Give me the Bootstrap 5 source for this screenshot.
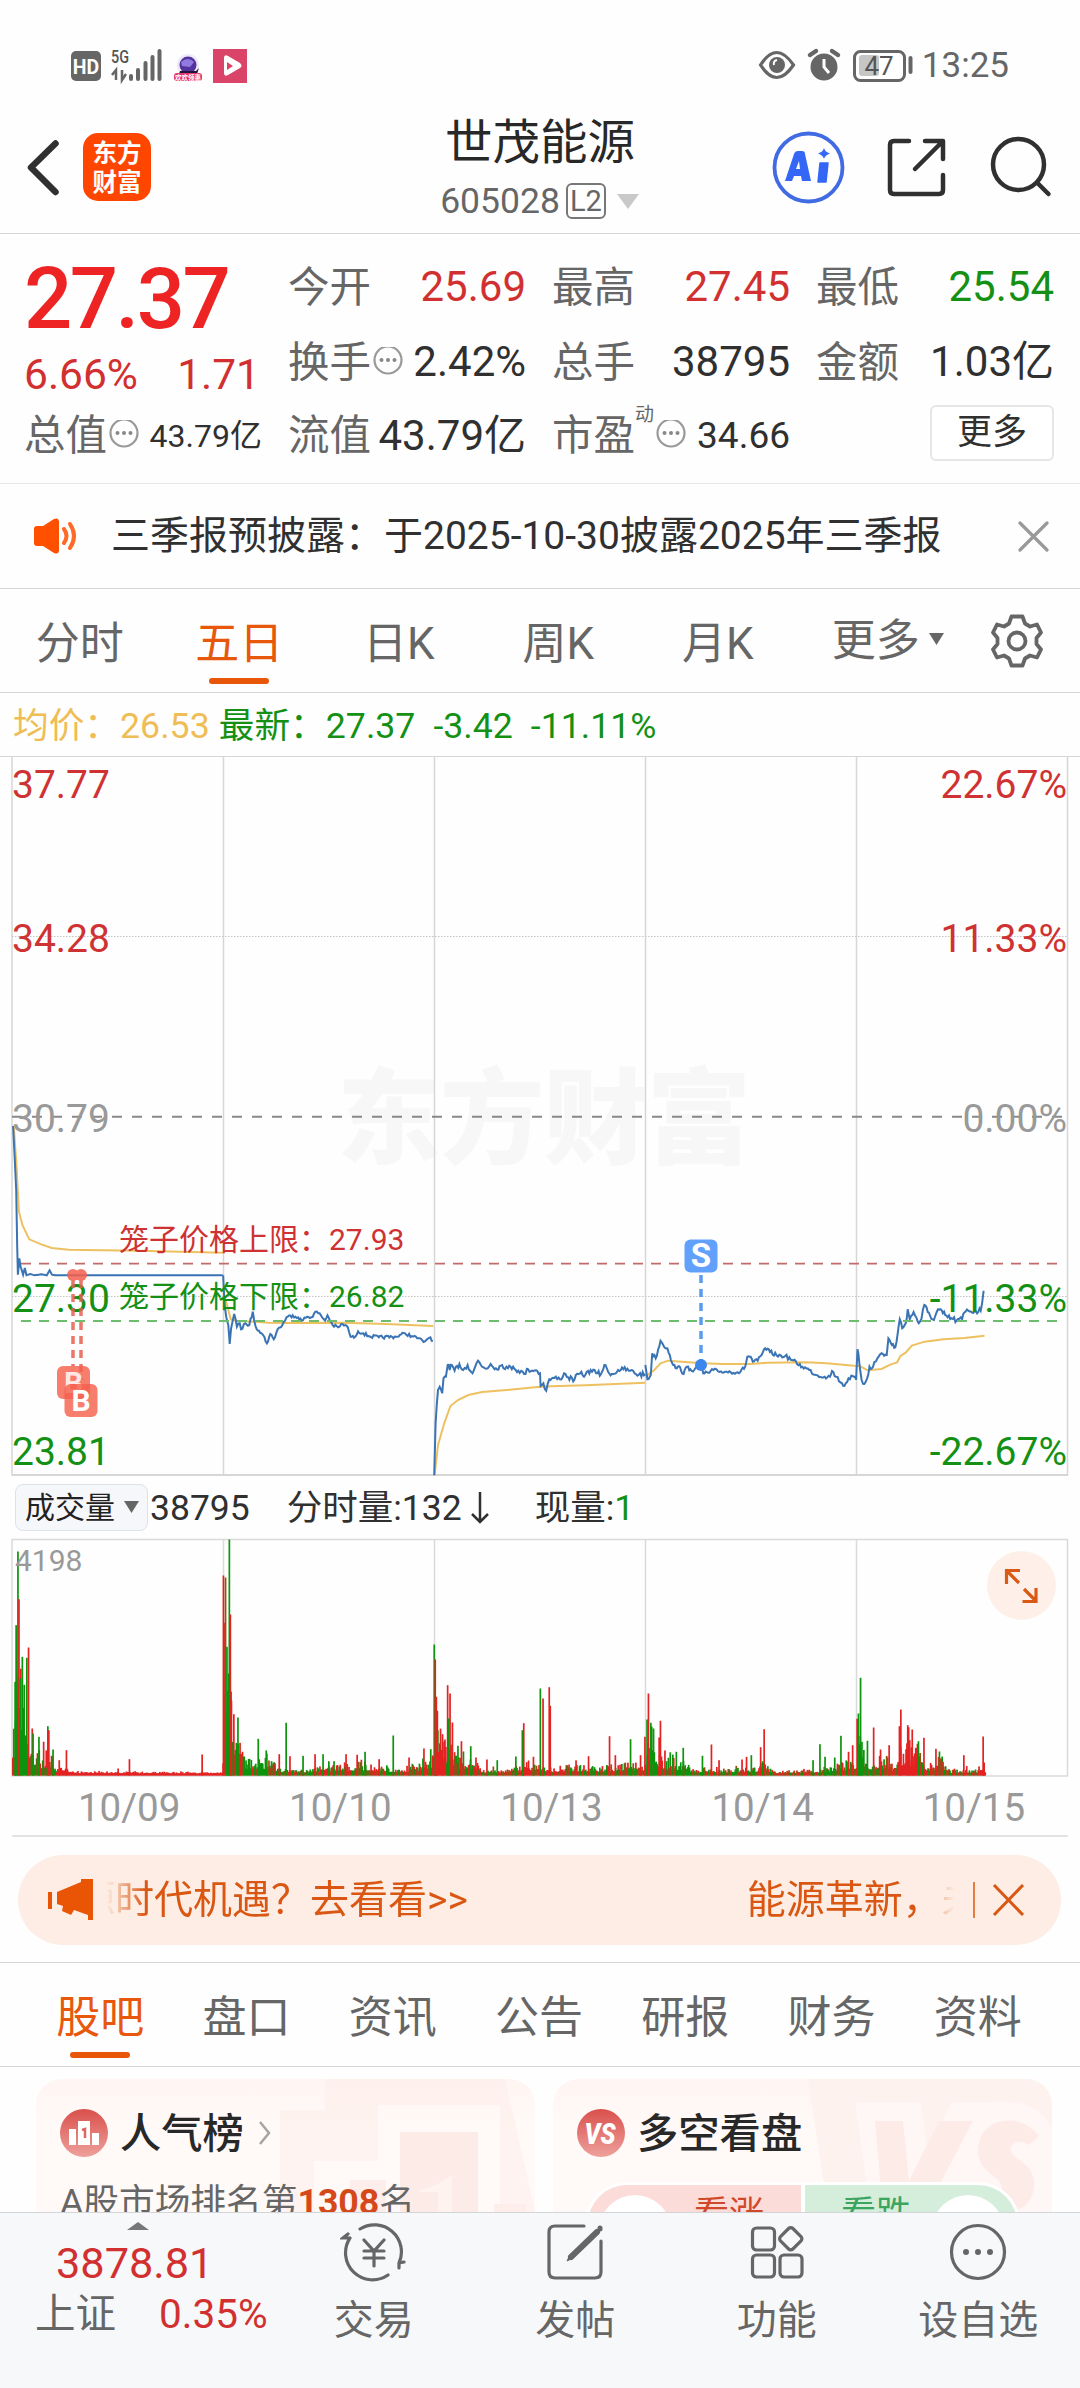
<!DOCTYPE html>
<html lang="zh-CN">
<head>
<meta charset="utf-8">
<meta name="viewport" content="width=device-width, initial-scale=1">
<title>世茂能源 605028</title>
<link href="https://cdn.jsdelivr.net/npm/bootstrap@5.3.0/dist/css/bootstrap.min.css" rel="stylesheet">
<style>
:root{--up:#d23030;--down:#149114;--accent:#e8580c;--ink:#303030;--muted-ink:#666;--rule:#d6d6d6}
body{font-family:Roboto,"Noto Sans CJK SC",sans-serif;color:var(--ink);background:#fefefe;width:1080px;height:2388px;overflow:hidden;line-height:1.2}
svg{display:block;flex:none}
svg text{font-family:Roboto,"Noto Sans CJK SC",sans-serif}
.c-up{color:var(--up)}.c-down{color:var(--down)}.c-muted{color:var(--muted-ink)}.c-accent{color:var(--accent)}
.rule-b{border-bottom:1px solid var(--rule)}
.status{height:100px;padding:32px 71px 0 70px;color:#666}
.clock{font-size:35px;margin-left:8px;line-height:68px}
.topbar{height:134px}
.side{width:340px}
.stock-name{font-size:47.5px;line-height:60px;color:#282828}
.stock-code{font-size:35.5px;line-height:52px;color:#666;padding-top:2px}
.tag-l2{border:2px solid #777;border-radius:6px;font-size:29px;line-height:32px;width:40px;height:36px;text-align:center;margin-left:6px}
.quote{height:250px;padding:16px 25px 0 24px;gap:26px;border-bottom:1px solid #e8e8e8}
.quote>div{width:238px}
.q-row{height:75px;font-size:42px;white-space:nowrap}
.q-row.last-row{height:72px}
.q-row .lab{font-size:41.5px;color:#666}
.price{height:98px;line-height:98px;font-size:85px;font-weight:500;color:#ee2424;letter-spacing:-2.5px;white-space:nowrap}
.chg{height:52px;font-size:42.5px;padding-right:2px}
.sup-dong{font-size:19px;color:#666;align-self:flex-start;margin-top:4px}
.btn-more{border:2px solid #e6e6e6;border-radius:6px;width:124px;height:56px;font-size:35px;line-height:50px;padding:0;color:var(--ink);background:#fff;text-align:center}
.notice{height:105px;padding:0 31px 0 33px;font-size:39px;white-space:nowrap}
.k-tabs{height:104px;font-size:44px;color:#666}
.k-tabs>div{height:103px;line-height:110px;position:relative;text-align:center;white-space:nowrap;width:159.5px}
.on{color:var(--accent)}
.on::after{content:"";position:absolute;left:50%;margin-left:-30px;bottom:8px;width:60px;height:6px;border-radius:3px;background:#e8560a}
.avg{height:64px;font-size:35.7px;line-height:66px;padding-left:13px;white-space:pre}
.volhead{height:62px;padding-left:15px;font-size:35.5px;white-space:nowrap}
.volhead>span{padding-top:3px}
.pill{width:133px;height:47px;border:1px solid #dfe2e7;border-radius:8px;background:#f6f7fa;font-size:30px;padding:2px 0 0 9px;color:#222}
.dates{height:60px;margin:0 12px;border-bottom:2px solid #e3e3e3;font-size:38.5px;line-height:61px;color:#999}
.dates div{flex:1 1 0;text-align:center;padding-left:23px}
.bannerwrap{height:126px;padding:18px 19px 0 18px}
.promo{height:90px;border-radius:45px;background:#fdede4;color:#d95712;font-size:39px;padding:0 33px 0 29px;white-space:nowrap}
.ticker{width:850px;height:90px;line-height:90px;margin-left:11px;overflow:hidden;-webkit-mask-image:linear-gradient(90deg,transparent 0,#000 40px,#000 808px,transparent 848px);mask-image:linear-gradient(90deg,transparent 0,#000 40px,#000 808px,transparent 848px)}
.ticker span:first-child{margin-left:-30px}
.ticker span:last-child{margin-left:279px}
.n-tabs{height:104px;padding:0 29px 0 27px;font-size:44px;color:#666}
.n-tabs>div{flex:1 1 0;text-align:center;line-height:110px;height:103px;position:relative}
.cards{height:145px;padding:12px 28px 0 36px;gap:18px;overflow:hidden}
.tile{width:499px;height:240px;border-radius:26px;background:linear-gradient(#fff5f2,#fffaf8 50px);position:relative;overflow:hidden;flex:none}
.tile>.art{position:absolute;inset:0}
.tile>.body{position:relative}
.tile h3{font-size:41.3px;line-height:50px;font-weight:500;margin:2px 0 0 12px;color:#282828}
.tile .head{padding:29px 0 0 24px;height:79px}
.rank{font-size:35.7px;line-height:48px;padding:20px 0 0 24px;color:#666;white-space:nowrap}
.rank b{color:#d5481a;font-weight:700}
.votebar{margin:24px 0 0 32px;width:435px;height:84px;border-radius:42px;overflow:hidden;border:3px solid #fff;font-size:35px;line-height:60px}
.votebar div{flex:1 1 0}
.foot{height:176px;background:#f7f8fa;border-top:1px solid #d4d5d9}
.idx{width:273px}
.idx .num{font-size:43.3px;line-height:44px;padding-left:56px;margin-top:10px}
.idx .sub{font-size:40.5px;line-height:50px;padding-left:35px;margin-top:3px}
.f-item{width:201.5px;font-size:40px;color:#666;line-height:50px;padding-top:9px}
</style>
<script src="https://cdn.jsdelivr.net/npm/bootstrap@5.3.0/dist/js/bootstrap.bundle.min.js"></script>
</head>
<body>

<div class="status d-flex justify-content-between align-items-center">
  <svg width="178" height="40" viewBox="70 46 178 40">
    <rect x="71" y="51" width="30" height="30" rx="5" fill="#666"/>
    <text x="86" y="73.500" font-size="19.500" font-weight="700" fill="#fff" text-anchor="middle">HD</text>
    <text x="111" y="63" font-size="18" font-weight="500" fill="#555" textLength="18" lengthAdjust="spacingAndGlyphs">5G</text>
    <path d="M116 80V70l-4 5M122 70v10l4-6" fill="none" stroke="#666" stroke-width="2.500"/>
    <path d="M131 76v3M138 70v9M145.500 63v16M152.500 57v22M159.500 51v28" stroke="#666" stroke-width="4" stroke-linecap="round"/>
    <circle cx="188" cy="65" r="11" fill="#eee9f6"/><circle cx="188" cy="65" r="8.500" fill="#53349f"/>
    <path d="M181 62q7-6 13 0l-4 5-8-1z" fill="#927be0"/><path d="M180 71h16l3-3-2 6h-18z" fill="#20163a"/>
    <rect x="174" y="73" width="28" height="8" rx="3" fill="#e5366f"/><text x="188" y="79.500" font-size="6.500" font-weight="700" fill="#fff" text-anchor="middle">欢欢领惠</text>
    <rect x="213" y="49" width="34" height="34" fill="#d94468"/>
    <path d="M224 58v15q0 4 4 2l12-7q3-2 0-5l-12-7q-4-2-4 2z" fill="#fff"/><path d="M227 62v8l6-4z" fill="#d94468"/>
  </svg>
  <div class="d-flex align-items-center">
    <svg width="156" height="40" viewBox="760 46 156 40" fill="none">
      <path d="M762.500 65q16-25 33 0q-17 25-33 0z" stroke="#666" stroke-width="3.200"/><circle cx="779" cy="65" r="8" fill="#666"/><path d="M776 65q-1-4 3-5" stroke="#fff" stroke-width="2"/>
      <circle cx="826" cy="67" r="13.500" fill="#666"/><path d="M826 59v8l5 6" stroke="#fff" stroke-width="3"/><path d="M812 55l6-4M840 55l-6-4" stroke="#666" stroke-width="4.500" stroke-linecap="round"/>
      <rect x="856.500" y="51.500" width="50" height="29" rx="6" stroke="#666" stroke-width="3"/><rect x="861" y="55" width="20" height="21" rx="3" fill="#c6c6c6"/>
      <path d="M912.500 58v14" stroke="#666" stroke-width="4" stroke-linecap="round"/>
      <text x="881" y="74.500" font-size="26" fill="#555" text-anchor="middle">47</text>
    </svg>
    <div class="clock">13:25</div>
  </div>
</div>

<header class="topbar rule-b d-flex justify-content-between">
  <div class="side d-flex align-items-center">
    <svg width="60" height="60" viewBox="0 136 60 60"><path d="M55.500 142.500L31 166.500l24.500 24.500" fill="none" stroke="#303030" stroke-width="6.500" stroke-linecap="round" stroke-linejoin="round"/></svg>
    <svg width="68" height="68" viewBox="0 0 68 68" style="margin-left:23px"><rect width="68" height="68" rx="15" fill="#ff4600"/><text font-weight="700" font-size="24.500" fill="#fff" text-anchor="middle"><tspan x="34" y="29">东方</tspan><tspan x="34" y="58">财富</tspan></text></svg>
  </div>
  <div class="text-center" style="padding-top:13px">
    <div class="stock-name">世茂能源</div>
    <div class="stock-code d-flex align-items-center justify-content-center">605028<span class="tag-l2">L2</span>
      <svg width="34" height="20" viewBox="0 0 34 20"><path d="M11 3h22L22 18z" fill="#c9c9c9"/></svg></div>
  </div>
  <div class="side d-flex align-items-center">
    <svg width="308" height="76" viewBox="770 128 308 76" fill="none" stroke="#303030" stroke-width="4.500" stroke-linecap="round" style="margin-left:30px">
      <circle cx="808.500" cy="166.500" r="34" stroke="#416be3" stroke-width="3.800"/>
      <path d="M785 180l9-27q1-3 4-3h4q3 0 3 3l6 27h-9l-1-5h-7l-2 5zM796 168h4l-1-8z" fill="#3467f5" stroke="none" fill-rule="evenodd"/>
      <path d="M820 162h8l-2 19h-8z" fill="#3467f5" stroke="#3467f5" stroke-width="1.500" stroke-linejoin="round"/>
      <path d="M824 147q1 4 6 5.500q-5 1.500-6 5.500q-1-4-6-5.500q5-1.500 6-5.500z" fill="#3467f5" stroke="none"/>
      <path d="M909 140h-15q-4 0-4 4v45q0 4 4 4h45q4 0 4-4v-15M925 140h18v18M942 141l-27 27" stroke-linejoin="round"/>
      <circle cx="1018.500" cy="163.500" r="25.500"/><path d="M1037 181.500l11.500 11.500"/>
    </svg>
  </div>
</header>

<section class="quote d-flex">
  <div>
    <div class="price">27.37</div>
    <div class="chg c-up d-flex justify-content-between align-items-center"><span>6.66%</span><span>1.71</span></div>
    <div class="q-row last-row d-flex align-items-center"><span class="lab">总值</span><svg width="32" height="32" viewBox="0 0 32 32"><circle cx="17" cy="12" r="13.500" fill="none" stroke="#999" stroke-width="2.200" transform="translate(0 1)"/><g fill="#888"><circle cx="10.500" cy="13" r="2"/><circle cx="17" cy="13" r="2"/><circle cx="23.500" cy="13" r="2"/></g></svg><span class="ms-auto" style="font-size:32px">43.79亿</span></div>
  </div>
  <div>
    <div class="q-row d-flex justify-content-between align-items-center"><span class="lab">今开</span><span class="c-up">25.69</span></div>
    <div class="q-row d-flex align-items-center"><span class="lab">换手</span><svg width="32" height="32" viewBox="0 0 32 32"><circle cx="17" cy="13" r="13.500" fill="none" stroke="#999" stroke-width="2.200"/><g fill="#888"><circle cx="10.500" cy="13" r="2"/><circle cx="17" cy="13" r="2"/><circle cx="23.500" cy="13" r="2"/></g></svg><span class="ms-auto">2.42%</span></div>
    <div class="q-row last-row d-flex justify-content-between align-items-center"><span class="lab">流值</span><span>43.79亿</span></div>
  </div>
  <div>
    <div class="q-row d-flex justify-content-between align-items-center"><span class="lab">最高</span><span class="c-up">27.45</span></div>
    <div class="q-row d-flex justify-content-between align-items-center"><span class="lab">总手</span><span>38795</span></div>
    <div class="q-row last-row d-flex align-items-center"><span class="lab">市盈</span><span class="sup-dong">动</span><svg width="32" height="32" viewBox="0 0 32 32"><circle cx="17" cy="13" r="13.500" fill="none" stroke="#999" stroke-width="2.200"/><g fill="#888"><circle cx="10.500" cy="13" r="2"/><circle cx="17" cy="13" r="2"/><circle cx="23.500" cy="13" r="2"/></g></svg><span class="ms-auto" style="font-size:37px">34.66</span></div>
  </div>
  <div>
    <div class="q-row d-flex justify-content-between align-items-center"><span class="lab">最低</span><span class="c-down">25.54</span></div>
    <div class="q-row d-flex justify-content-between align-items-center"><span class="lab">金额</span><span>1.03亿</span></div>
    <div class="q-row last-row d-flex justify-content-end align-items-center"><button class="btn-more" style="margin-top:-6px">更多</button></div>
  </div>
</section>

<section class="notice rule-b d-flex align-items-center">
  <svg width="46" height="38" viewBox="0 0 46 38"><path d="M1 12q0-3 3-3h6L21 2q5-2 5 3v28q0 5-5 3l-11-7H4q-3 0-3-3z" fill="#ff5000"/><path d="M31 12q5 7 0 14M37 7q8 12 0 24" fill="none" stroke="#ff6a26" stroke-width="4" stroke-linecap="round"/></svg>
  <span style="margin-left:32px">三季报预披露：于2025-10-30披露2025年三季报</span>
  <svg class="ms-auto" width="31" height="31" viewBox="0 0 31 31"><path d="M2 2l27 27M29 2L2 29" stroke="#999" stroke-width="3.200" stroke-linecap="round"/></svg>
</section>

<nav class="k-tabs rule-b d-flex">
  <div>分时</div><div class="on">五日</div><div>日K</div><div>周K</div><div>月K</div>
  <div class="d-flex align-items-center justify-content-center" style="padding-left:23px">更多<svg width="26" height="16" viewBox="0 0 26 16"><path d="M9 0h15l-7.500 12z" fill="#666"/></svg></div>
  <svg width="60" height="60" viewBox="-30 -30 60 60" style="margin:22px 0 0 30px" fill="none" stroke="#666" stroke-width="3.800" stroke-linejoin="round"><path d="M-5.500-24.500H5.500L8-17.500L13-14.500L20-16.500L24-8.500L19.500-3V3L24 8.500L20 16.500L13 14.500L8 17.500L5.500 24.500H-5.500L-8 17.500L-13 14.500L-20 16.500L-24 8.500L-19.500 3V-3L-24-8.500L-20-16.500L-13-14.500L-8-17.500Z"/><circle r="8.500"/></svg>
</nav>

<div class="avg rule-b"><span style="color:#efbd55">均价：26.53</span><span class="c-down"><span style="margin-left:9px">最新：27.37</span><span style="margin-left:18px">-3.42</span><span style="margin-left:18px">-11.11%</span></span></div>

<svg width="1080" height="719" viewBox="0 757 1080 719">
  <text x="337" y="1156" font-size="104" font-weight="900" fill="#f7f7f7" textLength="414">东方财富</text>
  <g stroke="#d6d6d6" stroke-width="1.500" fill="none"><path d="M12 757v719M223.500 757v719M434.500 757v719M645.500 757v719M856.500 757v719M1067.500 757v719"/><path d="M12 1475h1056" stroke-width="2"/></g>
  <path d="M12 936.500h1056M12 1296.500h1056" stroke="#c4c4c4" stroke-width="1" stroke-dasharray="1.500 1.500"/>
  <path d="M12 1116.700h1051" stroke="#888" stroke-width="2" stroke-dasharray="10 10"/>
  <g font-size="39"><g fill="#cf3232"><text x="12" y="797.500">37.77</text><text x="12" y="951.500">34.28</text><text x="1067" y="797.500" text-anchor="end">22.67%</text><text x="1067" y="951.500" text-anchor="end">11.33%</text></g>
  <g fill="#999"><text x="12" y="1131.500">30.79</text><text x="1067" y="1131.500" text-anchor="end">0.00%</text></g></g>
  <g transform="translate(0 1040) scale(.34436 .33333)" fill="none" stroke="#edc160">
    <path vector-effect="non-scaling-stroke" stroke-width="2" d="M40 258L48 380L55 515L65 555L85 598L120 613L150 624L200 629L400 632L647 638M648 760L658 790L670 838L690 843L740 845L780 848L830 849L1000 848L1120 852L1258 858M1262 1306L1272 1215L1290 1150L1308 1098L1330 1080L1360 1065L1400 1056L1480 1049L1560 1041L1600 1039L1700 1036L1874 1028M1874 1010L1900 990L1918 970L1940 962L1990 966L2040 970L2100 972L2180 972L2230 968L2340 967L2400 970L2480 977L2496 978L2520 991L2560 987L2585 974L2605 967L2615 948L2630 938L2648 917L2685 905L2740 898L2800 894L2859 887"/>
  </g>
  <path id="priceLine" fill="none" stroke="#3a74b4" stroke-width="2"/>
  <path d="M21 1263.700h1038" stroke="#c46a6a" stroke-width="1.800" stroke-dasharray="10 8"/>
  <path d="M21 1321h1038" stroke="#6ebd6e" stroke-width="1.800" stroke-dasharray="10 8"/>
  <text x="119" y="1250" font-size="30" fill="#cf3232">笼子价格上限：27.93</text>
  <text x="119" y="1307" font-size="30" fill="#149114">笼子价格下限：26.82</text>
  <g font-size="39" fill="#149114"><text x="12" y="1311.500">27.30</text><text x="12" y="1464.500">23.81</text><text x="1067" y="1311.500" text-anchor="end">-11.33%</text><text x="1067" y="1464.500" text-anchor="end">-22.67%</text></g>
  <g fill="#f5604d" opacity=".85"><circle cx="73" cy="1275" r="6"/><circle cx="81" cy="1275" r="6"/>
  <path d="M73 1280v86M81 1280v100" stroke="#e8604f" stroke-width="3.500" stroke-dasharray="8 6"/></g>
  <g fill="#f5604d" fill-opacity=".82"><rect x="57" y="1366" width="33" height="33" rx="6"/><text x="73.500" y="1393" font-size="30" font-weight="700" fill="#fff" text-anchor="middle">B</text>
  <rect x="64.500" y="1384" width="33" height="33" rx="6"/><text x="81" y="1411" font-size="30" font-weight="700" fill="#fff" fill-opacity="1" text-anchor="middle">B</text></g>
  <path d="M701 1275v86" stroke="#5b9bee" stroke-width="3.500" stroke-dasharray="8 6"/>
  <circle cx="701" cy="1365" r="6" fill="#3d86ec"/>
  <rect x="684.500" y="1239.500" width="33" height="33" rx="6" fill="#62a1fb"/><text x="701" y="1267" font-size="33" font-weight="700" fill="#fff" text-anchor="middle">S</text>
</svg>

<div class="volhead d-flex align-items-center">
  <div class="pill d-flex align-items-center">成交量<svg width="26" height="16" viewBox="0 0 26 16"><path d="M9 1h15l-7.500 12z" fill="#666"/></svg></div>
  <span style="margin-left:2px">38795</span><span style="margin-left:37px">分时量:132</span>
  <svg width="32" height="38" viewBox="0 0 32 38"><path d="M18 4v30M10 26l8 8 8-8" fill="none" stroke="#303030" stroke-width="2.500"/></svg>
  <span style="margin-left:41px">现量:<span class="c-down">1</span></span>
</div>

<svg width="1080" height="239" viewBox="0 1538 1080 239">
  <path d="M12 1539.500h1055.500V1776H12zM223.500 1540v235M434.500 1540v235M645.500 1540v235M856.500 1540v235" fill="none" stroke="#dadada" stroke-width="1.500"/>
  <g id="bars"></g>
  <text x="15" y="1570.500" font-size="30" fill="#999">4198</text>
  <circle cx="1021.500" cy="1585.500" r="34.500" fill="#fef0e8"/>
  <path d="M1006.500 1584v-13.500h13.500M1007 1571l12 12M1036 1588v13.500h-13.500M1036 1601l-12-12" fill="none" stroke="#d95a17" stroke-width="3.200"/>
</svg>
<div class="dates d-flex"><div>10/09</div><div>10/10</div><div>10/13</div><div>10/14</div><div>10/15</div></div>

<div class="bannerwrap rule-b">
  <div class="promo d-flex align-items-center">
    <svg width="48" height="42" viewBox="0 0 48 42" fill="#ea5505"><path d="M1 13h4v17H1zM10 13l24-10v-3h12v41h-5V36l-14-5-3 5-9-4 1-5-6-2z"/></svg>
    <div class="ticker"><span>源时代机遇？去看看&gt;&gt;</span><span>能源革新，未</span></div>
    <svg class="ms-auto" width="58" height="38" viewBox="0 0 58 38" fill="none" stroke="#d95712"><path d="M4 1v36" stroke-width="1.500"/><path d="M24 4l29 30M53 4L24 34" stroke-width="3"/></svg>
  </div>
</div>

<nav class="n-tabs rule-b d-flex"><div class="on">股吧</div><div>盘口</div><div>资讯</div><div>公告</div><div>研报</div><div>财务</div><div>资料</div></nav>

<section class="cards d-flex">
  <div class="tile">
    <svg class="art" width="499" height="133" viewBox="36 2079 499 133"><g fill="#fdece8" opacity=".5"><path d="M325 2079h180l30 133h-35v-107h-122v56h-64v51h-34v-102h45z"/></g><path d="M400 2132h78v80h-78z" fill="#fdebe8"/><path d="M420 2190q20-5 32-15v37h-14v-20h-18z" fill="#fff3f0"/><path d="M350 2180h36v32h-36zM494 2204h32v8h-32z" fill="#fdeeeb"/></svg>
    <div class="body">
      <div class="head d-flex align-items-center">
        <svg width="48" height="48" viewBox="0 0 48 48"><defs><linearGradient id="rg" x2="0" y2="1"><stop stop-color="#d9504c"/><stop offset="1" stop-color="#eea09b"/></linearGradient></defs><circle cx="24" cy="24" r="24" fill="url(#rg)"/><path d="M9 20h7v16H9zM18 12h12v24H18zM32 24h7v12h-7z" fill="#fff"/><path d="M22 21l3-1v9" stroke="#dc6762" stroke-width="2.500" fill="none"/></svg>
        <h3>人气榜</h3>
        <svg width="30" height="30" viewBox="0 0 30 30"><path d="M16 4l9 11-9 11" fill="none" stroke="#a5a5a5" stroke-width="2.500"/></svg>
      </div>
      <div class="rank">A股市场排名第<b>1308</b>名</div>
    </div>
  </div>
  <div class="tile">
    <svg class="art" width="499" height="133" viewBox="554 2079 499 133"><path d="M809 2079h244v133H829z" fill="#fef2ef"/><path d="M856 2102h66l6 50 25-50h40q50-4 60 30v80H872z" fill="#fff7f5"/><path d="M876 2121h28l6 60 30-60h34l-48 91H884z" fill="#fdebe8"/><path d="M1040 2136q-14-18-36-15-24 4-25 30 0 14 14 24 12 8 10 18-3 8-16 8v11h27q22-8 21-30-1-14-16-23-9-6-7-12 4-9 18-2z" fill="#fdebe8"/></svg>
    <div class="body">
      <div class="head d-flex align-items-center">
        <svg width="48" height="48" viewBox="0 0 48 48"><circle cx="24" cy="24" r="24" fill="url(#rg)"/><text x="23" y="35" font-size="30" font-weight="900" font-style="italic" fill="#fff" text-anchor="middle" textLength="31" lengthAdjust="spacingAndGlyphs">VS</text></svg>
        <h3>多空看盘</h3>
      </div>
      <div class="votebar d-flex">
        <div class="d-flex" style="background:#fcdcd9;color:#d0482a"><svg width="106" height="80" viewBox="0 0 106 80"><circle cx="47" cy="46" r="36" fill="#fff"/></svg><span>看涨</span></div>
        <div class="d-flex justify-content-end" style="background:#d5eedb;color:#3ba45f;border-left:4px solid #fff"><span>看跌</span><svg width="106" height="80" viewBox="0 0 106 80"><circle cx="57" cy="46" r="36" fill="#fff"/></svg></div>
      </div>
    </div>
  </div>
</section>

<footer class="foot d-flex">
  <div class="idx c-up">
    <svg width="273" height="19" viewBox="0 0 273 19"><path d="M127 17l11-8 11 8z" fill="#777"/></svg>
    <div class="num">3878.81</div>
    <div class="sub d-flex"><span class="c-muted">上证</span><span style="margin-left:43px">0.35%</span></div>
  </div>
  <div class="f-item d-flex flex-column align-items-center">
    <svg width="68" height="60" viewBox="-34 -30 68 60" fill="none" stroke="#666" stroke-width="3.200" stroke-linecap="round"><path d="M-14-23A27 27 0 0 1 25 11M25 11l5-1M25 11v5M14 23A27 27 0 0 1-24-14M-24-14h-7l5-4M-10-12L0-1L10-12M0-1v15M-10-1H10M-10 6H10"/></svg>
    <div style="margin-top:14px">交易</div></div>
  <div class="f-item d-flex flex-column align-items-center">
    <svg width="60" height="60" viewBox="-30 -30 60 60" fill="none" stroke="#666" stroke-width="3.200" stroke-linecap="round"><path d="M9-26h-29q-6 0-6 6v40q0 6 6 6h40q6 0 6-6v-31"/><path d="M22-20L-4 5" stroke-width="6"/><path d="M25-24v1" stroke-width="5"/><path d="M-5 3l-3 6 6-3z" stroke-width="1" fill="#666"/></svg>
    <div style="margin-top:14px">发帖</div></div>
  <div class="f-item d-flex flex-column align-items-center">
    <svg width="60" height="60" viewBox="-30 -30 60 60" fill="none" stroke="#666" stroke-width="3.200" stroke-linejoin="round"><rect x="-24.500" y="-24" width="22" height="22" rx="4"/><rect x="-24.500" y="3" width="22" height="22" rx="4"/><rect x="3" y="3" width="22" height="22" rx="4"/><rect x="5" y="-22" width="17.500" height="17.500" rx="3" transform="rotate(45 13.750 -13.250)"/></svg>
    <div style="margin-top:14px">功能</div></div>
  <div class="f-item d-flex flex-column align-items-center">
    <svg width="60" height="60" viewBox="-30 -30 60 60"><circle r="26.500" fill="none" stroke="#666" stroke-width="3.200"/><g fill="#666"><circle cx="-12" r="3"/><circle r="3"/><circle cx="12" r="3"/></g></svg>
    <div style="margin-top:14px">设自选</div></div>
</footer>

<script>
// seeded generator so the intraday texture is the same on every load
var seed = 7;
function rnd(){ seed = (seed * 16807) % 2147483647; return seed / 2147483647; }

// price series: [jitter, x, y, x, y, ...] in chart units
var days = [
 [0, 38,258, 43,360, 47,450, 50,620, 52,704, 56,655, 60,682, 63,690, 67,704, 72,684, 77,706, 88,702, 100,706, 120,703, 136,706, 144,691, 151,704, 160,706, 647,706],
 [5, 648,706, 652,790, 657,830, 663,855, 667,912, 671,865, 680,822, 688,860, 696,850, 700,868, 712,850, 724,855, 734,815, 742,858, 752,872, 764,885, 775,910, 785,882, 795,898, 806,868, 820,855, 832,832, 850,826, 866,832, 876,842, 892,830, 904,832, 916,815, 932,826, 944,842, 951,826, 966,856, 982,862, 995,852, 1010,862, 1018,890, 1028,893, 1040,874, 1055,880, 1070,888, 1100,892, 1150,890, 1176,880, 1200,890, 1215,895, 1230,906, 1242,896, 1250,892, 1257,903],
 [8, 1261,1306, 1265,1150, 1272,1050, 1277,1040, 1284,1060, 1288,1015, 1295,1010, 1300,975, 1306,990, 1312,975, 1320,992, 1334,972, 1345,990, 1358,975, 1372,1000, 1380,980, 1388,962, 1400,980, 1412,986, 1425,972, 1440,985, 1458,975, 1475,985, 1490,980, 1505,992, 1522,1002, 1534,988, 1560,992, 1568,1000, 1570,1038, 1578,1030, 1586,1052, 1595,1018, 1610,1014, 1626,1018, 1638,1000, 1650,1012, 1668,1019, 1680,1002, 1700,1004, 1715,990, 1735,1000, 1745,1003, 1755,975, 1766,995, 1780,1003, 1795,990, 1810,988, 1830,992, 1855,1004, 1874,1003],
 [6, 1874,975, 1880,1018, 1890,1005, 1894,940, 1904,955, 1918,902, 1926,915, 1938,925, 1945,945, 1955,975, 1965,985, 1975,982, 1985,1002, 1995,980, 2005,988, 2016,990, 2028,978, 2036,970, 2042,1000, 2060,998, 2072,990, 2085,994, 2110,995, 2150,996, 2164,980, 2170,950, 2180,950, 2186,965, 2200,962, 2212,945, 2222,925, 2236,936, 2255,946, 2280,948, 2300,960, 2330,980, 2350,990, 2370,1005, 2395,1010, 2410,1010, 2416,993, 2428,1010, 2445,1030, 2452,1038, 2464,1015, 2480,1010, 2486,1018],
 [9, 2486,1020, 2490,928, 2496,975, 2502,1020, 2510,1032, 2518,1015, 2525,980, 2535,980, 2548,955, 2560,940, 2575,945, 2580,895, 2590,915, 2600,922, 2607,880, 2613,838, 2620,865, 2630,850, 2636,808, 2642,838, 2653,816, 2662,835, 2668,850, 2676,836, 2684,795, 2694,816, 2712,840, 2724,808, 2738,820, 2752,832, 2778,842, 2794,838, 2800,818, 2812,812, 2830,814, 2848,812, 2852,790, 2856,755, 2859,755]
];
var d = "";
days.forEach(function(s){
  var k = s[0];
  for (var i = 1; i < s.length; i += 2) {
    var x = s[i], y = s[i+1];
    if (i === 1) { d += "M" + (x*.34436) + " " + (1040 + y/3); continue; }
    var px = s[i-2], py = s[i-1], n = Math.max(1, Math.round((x - px) / 4));
    for (var j = 1; j <= n; j++) {
      var e = j < n ? (rnd() - .5) * 2 * k : 0;
      d += "L" + ((px + (x-px)*j/n)*.34436).toFixed(1) + " " + (1040 + (py + (y-py)*j/n + e)/3).toFixed(1);
    }
  }
});
document.getElementById("priceLine").setAttribute("d", d);

// volume: background level between stops, then single tall bars
var R = "#e32222", G = "#0c940c", M = "#99500f", out = "";
var level = [[12,30,.6],[16,110,.8],[22,85,.7],[30,38,.4],[40,22,.3],[50,26,.4],[56,6,.1],[66,7,0],[75,3,0],[200,2,0],[222,2,0],[223,110,.5],[227,190,.9],[231,60,.3],[240,24,.5],[248,20,.8],[268,18,.6],[280,5,.4],[300,5,.5],[360,14,.5],[400,6,.3],[420,14,.5],[433,24,.4],[436,60,.2],[444,38,.6],[456,22,.5],[475,20,.5],[482,5,.3],[510,6,.4],[530,14,.3],[545,6,.2],[570,10,.6],[600,8,.4],[625,12,.3],[645,12,.4],[648,45,.6],[656,28,.4],[665,18,.6],[684,14,.9],[694,4,.4],[750,7,.3],[765,10,.6],[775,3,.3],[825,6,.7],[845,14,.5],[856,15,.4],[860,42,.9],[868,15,.6],[885,22,.3],[893,8,.4],[900,30,.1],[916,34,.5],[926,8,.5],[940,20,.5],[950,4,.5],[975,6,.2],[984,4,.3]];
function bar(x, h, c){ out += '<rect x="' + x.toFixed(1) + '" y="' + (1775.500 - h).toFixed(1) + '" width="1.700" height="' + h.toFixed(1) + '" fill="' + c + '"/>'; }
var li = 0;
for (var x = 12; x < 985; x += .88) {
  while (li < level.length - 2 && x >= level[li+1][0]) li++;
  var a = level[li], b = level[li+1], t = Math.min(1, (x - a[0]) / (b[0] - a[0]));
  var lv = a[1] + (b[1] - a[1]) * t, r = rnd();
  var h = 1.500 + lv * (.25 + .75 * r * r) + (rnd() > .93 ? lv * .5 : 0);
  bar(x, h, rnd() < a[2] ? G : (rnd() < .25 && a[2] > .2 ? M : R));
}
// [x, top, colour] in chart units
[[44,605,G],[47,435,G],[52,214,G],[55,357,R],[59,595,G],[65,530,G],[78,533,G],[83,502,R],[96,760,G],[113,770,G],[139,738,G],[142,750,R],[154,808,G],[172,840,R],[193,810,R],[376,837,R],[587,823,R],[343,865,R],
[649,286,R],[655,292,M],[659,500,G],[664,580,G],[666,178,G],[669,403,R],[672,662,R],[679,702,R],[691,712,G],[697,788,R],[750,776,G],[775,820,G],[811,822,R],[831,728,G],[842,828,R],[880,827,G],[915,822,R],[938,822,G],[955,843,G],[970,843,G],[1005,822,R],[1037,824,R],[1060,815,G],[1101,837,R],[1142,766,G],[1188,832,R],[1231,805,R],[1251,807,G],
[1261,493,G],[1264,538,R],[1267,650,R],[1270,692,R],[1285,762,R],[1300,615,R],[1303,715,G],[1307,640,R],[1314,727,R],[1340,783,R],[1330,797,G],[1367,798,G],[1382,832,R],[1414,838,R],[1444,840,G],[1498,829,G],[1517,750,G],[1521,729,R],[1549,830,R],[1569,625,G],[1577,655,R],[1595,621,R],[1598,677,R],[1709,828,R],[1770,768,R],[1787,825,R],[1831,777,G],[1860,825,R],
[1873,770,R],[1879,718,G],[1883,640,R],[1890,728,G],[1898,745,G],[1914,772,R],[1918,722,R],[1964,815,G],[1984,803,G],[2040,827,G],[2066,793,R],[2088,840,R],[2155,838,R],[2168,830,R],[2182,825,G],[2209,801,R],[2219,747,R],[2361,840,G],[2381,792,G],[2396,830,G],[2424,832,G],[2442,767,G],[2464,815,R],[2476,795,R],
[2489,716,R],[2493,700,G],[2499,593,G],[2503,785,G],[2519,782,G],[2537,742,R],[2557,808,R],[2582,795,R],[2612,738,R],[2616,688,R],[2636,735,R],[2642,780,R],[2649,748,R],[2656,820,R],[2667,783,G],[2683,773,R],[2718,806,R],[2728,814,G],[2799,825,R],[2855,769,R],[2858,847,R]
].forEach(function(s){ bar(s[0]*.34436 - .850, (886 - s[1]) / 3, s[2]); });
document.getElementById("bars").innerHTML = out;
</script>
</body>
</html>
